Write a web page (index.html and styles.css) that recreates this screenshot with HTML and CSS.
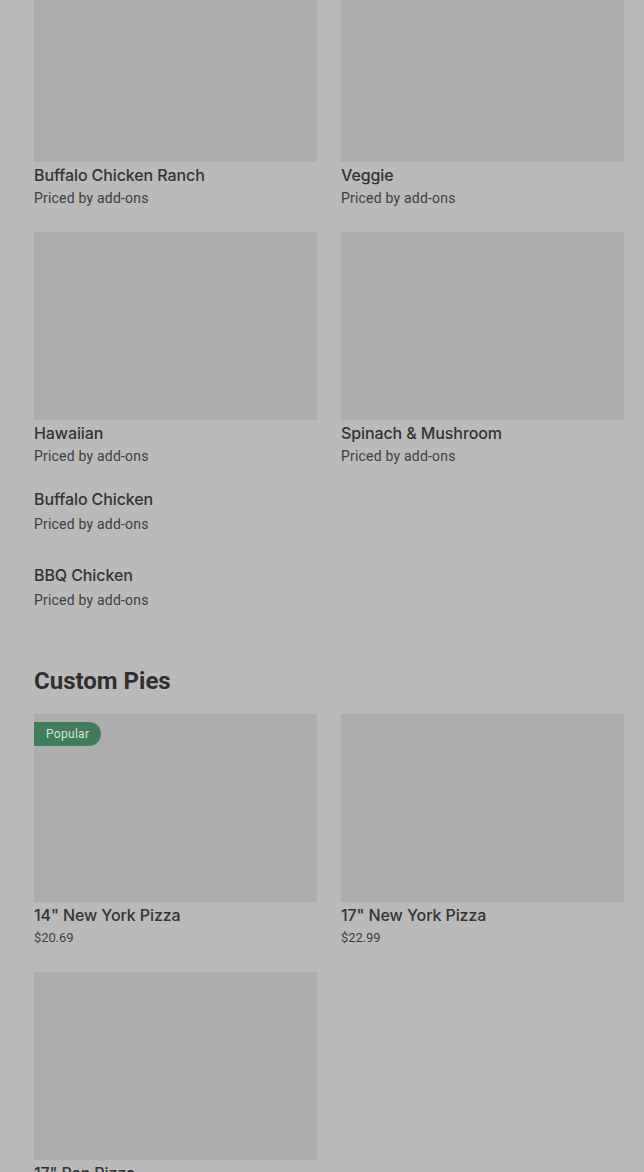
FILE: index.html
```html
<!DOCTYPE html>
<html lang="en">
<head>
<meta charset="utf-8">
<title>Menu</title>
<link rel="stylesheet" href="styles.css">
</head>
<body>
<main class="page">
  <section class="grid">
    <article class="card">
      <div class="thumb"></div>
      <h3 class="title">Buffalo Chicken Ranch</h3>
      <p class="sub">Priced by add-ons</p>
    </article>
    <article class="card">
      <div class="thumb"></div>
      <h3 class="title">Veggie</h3>
      <p class="sub">Priced by add-ons</p>
    </article>
    <article class="card">
      <div class="thumb"></div>
      <h3 class="title">Hawaiian</h3>
      <p class="sub">Priced by add-ons</p>
    </article>
    <article class="card">
      <div class="thumb"></div>
      <h3 class="title">Spinach &amp; Mushroom</h3>
      <p class="sub">Priced by add-ons</p>
    </article>
  </section>

  <section class="list">
    <article class="item">
      <h3 class="title">Buffalo Chicken</h3>
      <p class="sub">Priced by add-ons</p>
    </article>
    <article class="item">
      <h3 class="title">BBQ Chicken</h3>
      <p class="sub">Priced by add-ons</p>
    </article>
  </section>

  <h2 class="section-title">Custom Pies</h2>

  <section class="grid">
    <article class="card">
      <div class="thumb">
        <span class="badge">Popular</span>
      </div>
      <h3 class="title">14" New York Pizza</h3>
      <p class="sub price">$20.69</p>
    </article>
    <article class="card">
      <div class="thumb"></div>
      <h3 class="title">17" New York Pizza</h3>
      <p class="sub price">$22.99</p>
    </article>
    <article class="card">
      <div class="thumb"></div>
      <h3 class="title">17" Pan Pizza</h3>
      <p class="sub price">$22.99</p>
    </article>
  </section>
</main>
</body>
</html>
```

FILE: styles.css
```css
html, body {
  margin: 0;
  padding: 0;
  background: #bababa;
}

body {
  font-family: Roboto, "Liberation Sans", sans-serif;
  color: #333333;
  overflow: hidden;
  height: 1172px;
}

.page {
  margin-top: -26px;
  padding: 0 20px 0 34px;
}

.grid {
  display: grid;
  grid-template-columns: 283px 283px;
  column-gap: 24px;
  row-gap: 24px;
}

.card {
  display: flex;
  flex-direction: column;
}

.thumb {
  position: relative;
  height: 188px;
  background: #adadad;
}

.title {
  margin: 1px 0 0;
  font-family: Inter, Roboto, sans-serif;
  font-size: 16px;
  line-height: 24px;
  font-weight: 500;
  letter-spacing: -0.1px;
  color: #333333;
}

.sub {
  margin: 1px 0 0;
  font-size: 14px;
  line-height: 20px;
  font-weight: 400;
  letter-spacing: 0.2px;
  color: #3d3d3d;
}

.price {
  font-size: 13px;
  letter-spacing: -0.1px;
}

.list {
  margin-top: 7px;
  display: flex;
  flex-direction: column;
}

.item {
  height: 76px;
  box-sizing: border-box;
  padding-top: 14px;
  display: flex;
  flex-direction: column;
  gap: 3px;
}

.item .title {
  margin: 0;
}

.item .sub {
  margin: 0;
}

.section-title {
  margin: 40px 0 17px;
  font-size: 24px;
  line-height: 32px;
  font-weight: 700;
  color: #2f2f2f;
  letter-spacing: 0;
}

.badge {
  position: absolute;
  top: 8px;
  left: 0;
  height: 24px;
  padding: 0 12px;
  display: flex;
  align-items: center;
  background: #3f7d5b;
  color: #d7e5dc;
  font-size: 12px;
  letter-spacing: 0.3px;
  border-radius: 0 12px 12px 0;
}
```
